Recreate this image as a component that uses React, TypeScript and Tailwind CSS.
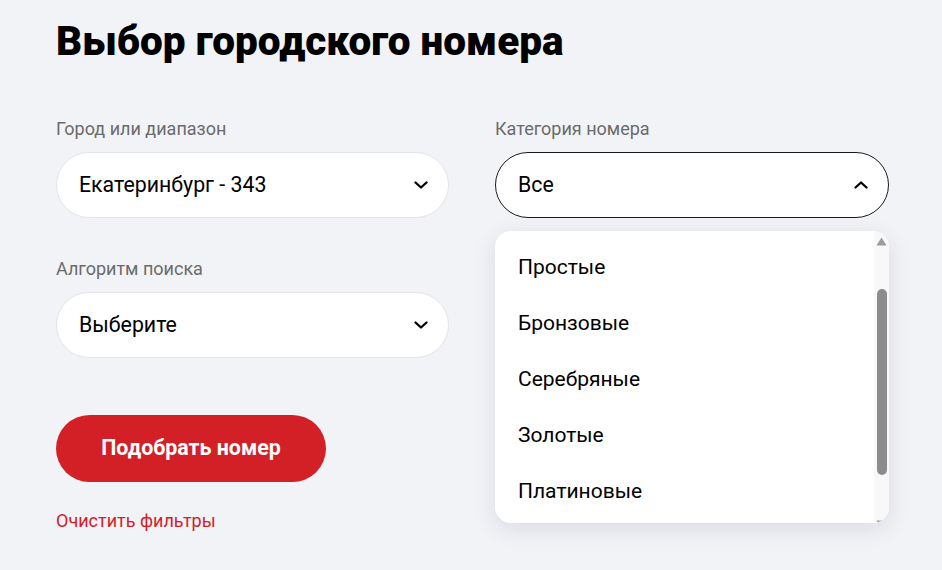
import React from "react";

const CATEGORIES = ["Простые", "Бронзовые", "Серебряные", "Золотые", "Платиновые"];

function Chevron({ up = false }: { up?: boolean }) {
  return (
    <svg width="14" height="8" viewBox="0 0 14 8" fill="none" className="shrink-0">
      <path
        d={up ? "M1.5 6.5 L7 1.5 L12.5 6.5" : "M1.5 1.5 L7 6.5 L12.5 1.5"}
        stroke="#000"
        strokeWidth="2.3"
        strokeLinecap="round"
        strokeLinejoin="round"
      />
    </svg>
  );
}

function SelectField({
  label,
  value,
  open = false,
  children,
}: {
  label: string;
  value: string;
  open?: boolean;
  children?: React.ReactNode;
}) {
  return (
    <div className="relative flex flex-col">
      <span className="text-[18px] leading-6 text-[#6b6b6b]">{label}</span>
      <button
        type="button"
        className={
          "mt-[11px] flex h-[66px] w-full items-center justify-between rounded-full bg-white pl-[22px] pr-[20px] text-left " +
          (open ? "border border-[#1a1a1a]" : "border border-[#e4e4e7]")
        }
      >
        <span className="text-[21.3px] leading-none text-black">{value}</span>
        <Chevron up={open} />
      </button>
      {children}
    </div>
  );
}

function CategoryMenu() {
  return (
    <div className="absolute left-0 top-[calc(100%+13px)] z-10 flex h-[292px] w-[394px] overflow-hidden rounded-2xl bg-white shadow-[0_6px_24px_rgba(20,24,40,0.10)]">
      <ul className="flex-1 pt-[9px]">
        {CATEGORIES.map((c) => (
          <li key={c} className="flex h-14 items-center pl-[23px] text-[21px] text-black">
            {c}
          </li>
        ))}
      </ul>
      {/* scrollbar */}
      <div className="relative flex w-[15px] flex-col items-center bg-[#f8f8f8]">
        <svg width="11" height="9" viewBox="0 0 11 9" className="mt-[6px]">
          <path d="M5.5 0.5 L10.5 8.5 L0.5 8.5 Z" fill="#9b9b9b" />
        </svg>
        <div className="mt-[43px] h-[186px] w-[10px] rounded-full bg-[#8c8c8c]" />
        <svg width="11" height="9" viewBox="0 0 11 9" className="absolute bottom-[-6px]">
          <path d="M0.5 0.5 L10.5 0.5 L5.5 8.5 Z" fill="#9b9b9b" />
        </svg>
      </div>
    </div>
  );
}

export default function App() {
  return (
    <div className="min-h-[570px] bg-[#f2f3f7] font-['Roboto',sans-serif] text-black">
      <div className="pl-[56px] pt-[18px]">
        <h1 className="text-[40.5px] font-black leading-[46px]">Выбор городского номера</h1>

        <div className="mt-[53px] grid grid-cols-[393px_394px] gap-x-[46px] gap-y-[39px]">
          <SelectField label="Город или диапазон" value="Екатеринбург - 343" />
          <SelectField label="Категория номера" value="Все" open>
            <CategoryMenu />
          </SelectField>
          <SelectField label="Алгоритм поиска" value="Выберите" />
          <div />
        </div>

        <button
          type="button"
          className="mt-[57px] flex h-[67px] w-[270px] items-center justify-center rounded-full bg-[#d32027] text-[21.4px] font-bold text-white"
        >
          Подобрать номер
        </button>

        <a href="#" className="mt-[27px] block w-fit text-[18px] leading-6 text-[#d32027]">
          Очистить фильтры
        </a>
      </div>
    </div>
  );
}
